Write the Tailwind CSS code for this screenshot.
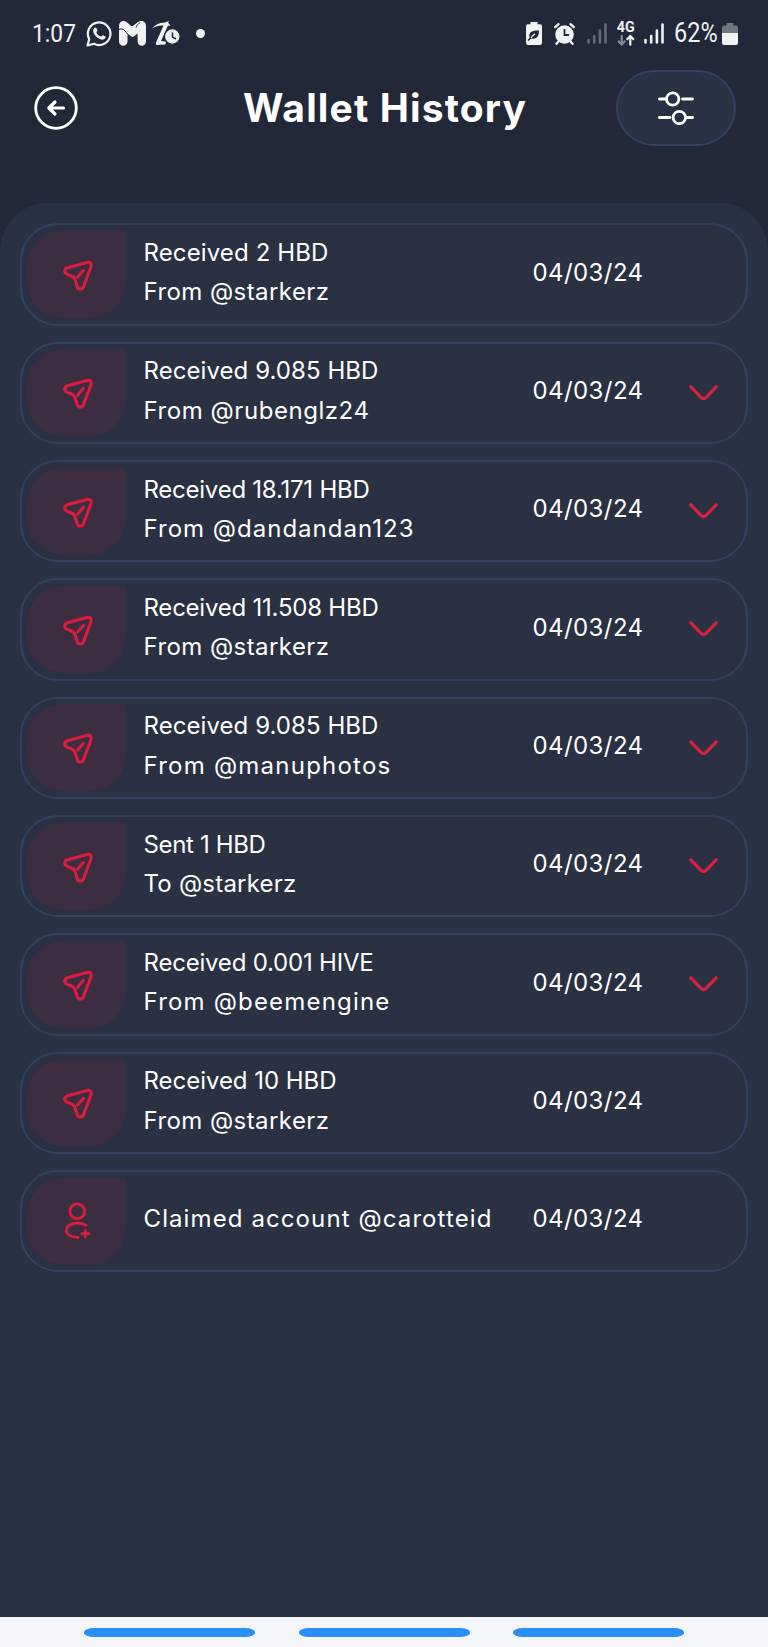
<!DOCTYPE html>
<html lang="en">

<head>
  <meta charset="UTF-8" />
  <meta name="viewport" content="width=device-width, initial-scale=1.0" />
  <title>Wallet History</title>
  <script src="https://cdn.jsdelivr.net/npm/@tailwindcss/browser@4"></script>
</head>

<body class="flex flex-col h-[1647px] overflow-hidden bg-[#222838] text-white font-['Inter',sans-serif]">
  <!-- Status bar -->
  <div class="flex items-center justify-between h-[67px] pl-[32px] pr-[30px] text-[#f0f1f3]">
    <div class="flex items-center">
      <span class="w-[54px] whitespace-nowrap font-['Roboto'] text-[26.5px] leading-none origin-left scale-x-[.86]">1:07</span>
      <svg class="w-[26px] h-[26px]" viewBox="0 0 26 26" fill="none" stroke="currentColor" stroke-width="2.2">
        <path d="M1.500 24.500l1.700-6.400A11.300 11.300 0 1 1 8 22.800z" stroke-linejoin="round" />
        <path d="M8.3 7.1c.8-.8 1.8-.7 2.2.2l.9 2c.2.7-.8 1.3-1 1.9.7 2 2.4 3.7 4.6 4.4.7-.2 1.3-1.6 2-1.3l2.1 1c.8.5.7 1.5 0 2.3-1.3 1.3-3.2 1.3-5.3.4-3.1-1.3-5-3.3-6.1-5.9-.8-1.9-.7-3.7.6-5z" fill="currentColor" stroke="none" />
      </svg>
      <svg class="w-[27px] h-[25px] ml-[7px]" viewBox="0 0 27 25" fill="currentColor">
        <path d="M0 5C0-.2 5.500-1.200 8.500 1.800L11.500 4.500Q13 5.500 14.500 4.500L18 1.700C21.500-1.200 27-.2 27 5v15.500a4.200 4.200 0 0 1-8.400 0V12.500L15 15.300q-1.500 1.200-3 0L8.500 12.500v8a4.200 4.200 0 0 1-8.500 0z" />
        <path d="M0 8.500c3-1.500 5-.3 8.500 4.500M17 6.500c.8-2.300 2.200-3.800 3.800-4.700" fill="none" stroke="#222838" stroke-width="1" />
      </svg>
      <svg class="w-[29px] h-[25px] ml-[6px]" viewBox="0 0 29 25">
        <path d="M0 7.500C4 3.200 8 1.600 12 1.800L17 0l-1 2.100c1.200.7 2 1.600 2.300 3L16 4.500 9 20l5 .5-.5 3-9.500.5v-2.500L11.500 4.600C7 4.200 4 5.500 0 7.500z" fill="currentColor" />
        <circle cx="20.300" cy="15.500" r="7.800" fill="currentColor" stroke="#222838" stroke-width="1.2" />
        <path d="M20.500 11.500v4.500l3.500 2" fill="none" stroke="#222838" stroke-width="1.5" />
      </svg>
      <div class="size-[9px] ml-[15px] rounded-full bg-[#f0f1f3]"></div>
    </div>

    <div class="flex items-center">
      <svg class="w-[16px] h-[23px]" viewBox="0 0 16 23">
        <path d="M4.500 2.300V0h7v2.300H14a2 2 0 0 1 2 2V21a2 2 0 0 1-2 2H2a2 2 0 0 1-2-2V4.300a2 2 0 0 1 2-2z" fill="currentColor" />
        <path d="M3.500 15.500C2.500 10 6 8.500 13 8.500c0 6-2.500 9.300-8.300 7.800L2.500 18.500" fill="#222838" />
        <path d="M4.500 16L9 11.700" stroke="#f0f1f3" stroke-width="1.2" />
        <path d="M2 18.500l3-2.800" stroke="#222838" stroke-width="1.4" />
      </svg>
      <svg class="w-[21px] h-[22px] ml-[12px]" viewBox="0 0 21 22" fill="none" stroke="currentColor" stroke-linecap="round">
        <circle cx="10.500" cy="11.500" r="9.300" fill="currentColor" stroke="none" />
        <path d="M1.200 4.200L4.500 1.200M19.800 4.200l-3.300-3M4.500 18.500l-2 2.300M16.500 18.500l2 2.300" stroke-width="2.3" />
        <path d="M10.500 6v6H15" stroke="#222838" stroke-width="1.8" stroke-linecap="butt" />
      </svg>
      <svg class="w-[20px] h-[21px] ml-[12px]" viewBox="0 0 20 21" stroke="#646977" stroke-width="2.6" stroke-linecap="round">
        <path d="M1.500 17v2.500M7.200 13v6.500M12.900 7.500v12M18.500 1.500v18" />
      </svg>
      <div class="flex flex-col items-center w-[18px] h-[24px] ml-[10px]">
        <span class="font-['Roboto'] font-bold text-[15.5px] leading-[11px] scale-x-[.92]">4G</span>
        <svg class="w-[18px] h-[12px] mt-[1px]" viewBox="0 12 18 12" fill="none" stroke-width="2.2">
          <path d="M4.700 13v9.200M1 18.800l3.700 3.700 3.500-3.700" stroke="#858a96" />
          <path d="M13.300 23.500v-9.200M9.700 17.800l3.600-3.700 3.600 3.700" stroke="currentColor" />
        </svg>
      </div>
      <svg class="w-[20px] h-[21px] ml-[9px]" viewBox="0 0 20 21" stroke="currentColor" stroke-width="2.6" stroke-linecap="round">
        <path d="M1.500 17v2.500M7.200 13v6.500M12.900 7.500v12M18.500 1.500v18" />
      </svg>
      <span class="w-[48px] ml-[10px] whitespace-nowrap font-['Roboto'] text-[27px] leading-none origin-left scale-x-[.87]">62%</span>
      <svg class="w-[16px] h-[22px]" viewBox="0 0 16 22">
        <path d="M4.500 2.500V0h7v2.500H14a2 2 0 0 1 2 2V10H0V4.500a2 2 0 0 1 2-2z" fill="#70747f" />
        <path d="M0 10h16v10a2 2 0 0 1-2 2H2a2 2 0 0 1-2-2z" fill="currentColor" />
      </svg>
    </div>
  </div>

  <!-- Header -->
  <header class="flex items-start h-[136px] pt-[3px] pl-[34px] pr-[32px]">
    <svg class="w-[44px] h-[44px] mt-[16px]" viewBox="0 0 44 44" fill="none" stroke="currentColor" stroke-width="2.8" stroke-linecap="round" stroke-linejoin="round">
      <circle cx="22" cy="22" r="20.300" />
      <path d="M29.500 22H15M21 16l-6.200 6 6.200 6" stroke-width="3.2" />
    </svg>
    <h1 class="w-[284px] ml-[165px] mt-[14px] text-[39px] leading-[48px] font-bold whitespace-nowrap" data-font="700 39px Inter" data-width="284">Wallet History</h1>
    <button class="flex items-center justify-center w-[120px] h-[76px] ml-auto rounded-[38px] border-2 border-[#334060] bg-[#293144]">
      <svg class="w-[36px] h-[34px]" viewBox="0 0 36 34" fill="none" stroke="currentColor" stroke-width="2.8" stroke-linecap="round">
        <circle cx="14.700" cy="8" r="6.200" />
        <circle cx="21.300" cy="26.500" r="6.200" />
        <path d="M1.400 8H7M24.500 8h10M1.400 26.500H12M29 26.500h5.600" />
      </svg>
    </button>
  </header>

  <main id="history" class="flex flex-col flex-1 gap-[16px] pt-[20.2px] px-[20px] rounded-t-[48px] bg-[#293244]"></main>

  <!-- Navigation gesture bar -->
  <footer class="flex justify-center gap-[43.5px] h-[30px] pt-[11px] bg-[#f4f5f8]">
    <div class="w-[171px] h-[8.5px] rounded-[10px/4px] bg-[#2a8ff5]"></div>
    <div class="w-[171px] h-[8.5px] rounded-[10px/4px] bg-[#2a8ff5]"></div>
    <div class="w-[171px] h-[8.5px] rounded-[10px/4px] bg-[#2a8ff5]"></div>
  </footer>

  <script>
    // Each line is [text, width in px]
    const history = [
      { icon: "send", lines: [["Received 2 HBD", 185], ["From @starkerz", 186]], memo: false },
      { icon: "send", lines: [["Received 9.085 HBD", 235], ["From @rubenglz24", 226]], memo: true },
      { icon: "send", lines: [["Received 18.171 HBD", 226], ["From @dandandan123", 271]], memo: true },
      { icon: "send", lines: [["Received 11.508 HBD", 235], ["From @starkerz", 186]], memo: true },
      { icon: "send", lines: [["Received 9.085 HBD", 235], ["From @manuphotos", 248]], memo: true },
      { icon: "send", lines: [["Sent 1 HBD", 122], ["To @starkerz", 153]], memo: true },
      { icon: "send", lines: [["Received 0.001 HIVE", 230], ["From @beemengine", 247]], memo: true },
      { icon: "send", lines: [["Received 10 HBD", 193], ["From @starkerz", 186]], memo: false },
      { icon: "user", lines: [["Claimed account @carotteid", 349]], memo: false },
    ];

    const icons = {
      send: `<svg class="w-[30px] h-[31px] ml-[3px] mt-[2px]" viewBox="0 0 30 31" fill="none" stroke="#dc1c3f" stroke-width="3.1" stroke-linecap="round" stroke-linejoin="round">
        <path d="M24 2.400L4.500 7.700C.8 8.800.9 12.800 4 14.100L9.500 16.500Q11.200 17.300 11.900 19.300L14.300 26.800C15.500 29.800 19.200 29.800 20.400 26.800L27.800 7.300C29 3.800 27.200 1.500 24 2.400Z" />
        <path d="M14.700 17l5.800-6.700" />
      </svg>`,
      user: `<svg class="w-[27px] h-[38px] ml-[1px]" viewBox="0 0 27 38" fill="none" stroke="#dc1c3f" stroke-width="2.8" stroke-linecap="round">
        <circle cx="13.300" cy="9.300" r="7.400" />
        <path d="M22 23.300C19.500 21.600 16 21 13 21 6 21 2.300 25 2.300 28.500 2.300 32.500 7 35.200 14 35.500M21.300 28.300v6.800M17.900 31.700h6.800" />
      </svg>`,
    };

    const chevron = `<svg class="w-[29px] h-[16px] ml-auto mr-[28px]" viewBox="0 0 29 16" fill="none" stroke="#d8203f" stroke-width="3.2" stroke-linecap="round" stroke-linejoin="round">
        <path d="M1.800 1.800L12 12.300Q14.500 14.700 17 12.300L27.200 1.800" />
      </svg>`;

    document.getElementById("history").innerHTML = history.map((item) => `
      <div class="flex items-center h-[102.35px] shrink-0 pl-[5px] rounded-[38px] border-2 border-[#34415e] bg-[#293143]">
        <div class="flex items-center justify-center w-[99px] h-[87px] rounded-[36px] rounded-tr-[3px] bg-[#3c2d40]">${icons[item.icon]}</div>
        <div class="w-[389px] ml-[17.5px] pb-[4px] text-[24px] leading-[39.5px] whitespace-nowrap">
          ${item.lines.map(([text, width]) => `<div><span data-font="24px Inter" data-width="${width}">${text}</span></div>`).join("")}
        </div>
        <div class="w-[114px] pb-[4px] text-[24px] leading-[39.5px] whitespace-nowrap"><span data-font="24px Inter" data-width="111">04/03/24</span></div>
        ${item.memo ? chevron : ""}
      </div>`).join("");

    // Spread the letters of each line over its width
    const ctx = document.createElement("canvas").getContext("2d");
    document.querySelectorAll("[data-width]").forEach((el) => {
      ctx.font = el.dataset.font;
      const extra = el.dataset.width - ctx.measureText(el.textContent).width;
      el.style.letterSpacing = `${extra / el.textContent.length}px`;
    });
  </script>
</body>

</html>
